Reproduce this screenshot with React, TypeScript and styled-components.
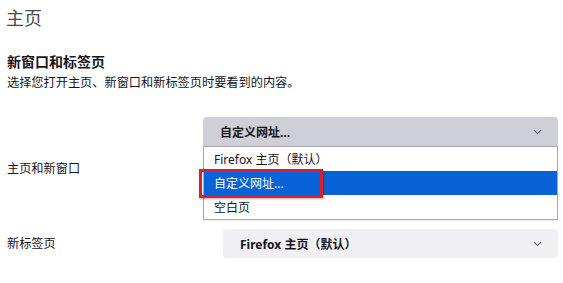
import React from "react";
import styled, { createGlobalStyle } from "styled-components";

const GlobalStyle = createGlobalStyle`
  html, body {
    margin: 0;
    padding: 0;
    background: #ffffff;
  }
  body {
    font-family: "Noto Sans", "Noto Sans CJK SC", sans-serif;
    color: #15141a;
  }
  * { box-sizing: border-box; }
`;

const Page = styled.div`
  width: 563px;
  height: 283px;
  padding: 6px 5px 0 6px;
  overflow: hidden;
`;

const Title = styled.h1`
  margin: 0;
  font-size: 18px;
  line-height: 24px;
  font-weight: 400;
  color: #4a4a4f;
`;

const SectionHeading = styled.h2`
  margin: 22px 0 0 1px;
  font-size: 14px;
  line-height: 20px;
  font-weight: 700;
  color: #15141a;
`;

const Description = styled.p`
  margin: 1px 0 0 1px;
  font-size: 12.2px;
  line-height: 20px;
  color: #15141a;
`;

const SettingsGrid = styled.div`
  margin-top: 24px;
  display: grid;
  grid-template-columns: 197px 1fr;
  row-gap: 9px;
  align-items: center;
`;

const Label = styled.div`
  font-size: 12.2px;
  line-height: 20px;
  padding-left: 1px;
  color: #15141a;
`;

const Control = styled.div<{ $reserve?: number; $indent?: number }>`
  position: relative;
  display: flex;
  flex-direction: column;
  padding-left: ${(p) => p.$indent ?? 0}px;
  padding-bottom: ${(p) => p.$reserve ?? 0}px;
`;

const SelectButton = styled.div<{ $open?: boolean }>`
  height: 29px;
  display: flex;
  align-items: center;
  justify-content: space-between;
  padding: 0 16px 0 17px;
  border-radius: ${(p) => (p.$open ? "4px 4px 0 0" : "4px")};
  background: ${(p) => (p.$open ? "#cfcfd8" : "#f0f0f4")};
  font-size: 12px;
  font-weight: 700;
  color: #15141a;
`;

const Chevron = () => (
  <svg width="9" height="6" viewBox="0 0 9 6" aria-hidden="true">
    <path d="M1 1.2 L4.5 4.6 L8 1.2" fill="none" stroke="#5b5b66" strokeWidth="1.1" />
  </svg>
);

const Popup = styled.ul`
  position: absolute;
  top: 29px;
  left: 0;
  right: 0;
  margin: 0;
  padding: 0;
  list-style: none;
  background: #ffffff;
  border: 1px solid #a8a8ad;
  box-shadow: 0 1px 2px rgba(0, 0, 0, 0.08);
`;

const Option = styled.li<{ $selected?: boolean }>`
  height: 24px;
  display: flex;
  align-items: center;
  padding-left: 10px;
  font-size: 12px;
  background: ${(p) => (p.$selected ? "#0862d8" : "transparent")};
  color: ${(p) => (p.$selected ? "#ffffff" : "#15141a")};
`;

const Highlight = styled.div`
  position: absolute;
  top: 52px;
  left: -4px;
  width: 124px;
  height: 29px;
  border: 3px solid #d5222c;
  box-shadow: 1px 1px 2px rgba(80, 0, 0, 0.35);
  pointer-events: none;
`;

export default function App() {
  return (
    <>
      <GlobalStyle />
      <Page>
        <Title>主页</Title>
        <SectionHeading>新窗口和标签页</SectionHeading>
        <Description>选择您打开主页、新窗口和新标签页时要看到的内容。</Description>
        <SettingsGrid>
          <Label>主页和新窗口</Label>
          <Control $reserve={74}>
            <SelectButton $open>
              <span>自定义网址...</span>
              <Chevron />
            </SelectButton>
            <Popup>
              <Option>Firefox 主页（默认）</Option>
              <Option $selected>自定义网址...</Option>
              <Option>空白页</Option>
            </Popup>
            <Highlight />
          </Control>
          <Label>新标签页</Label>
          <Control $indent={20}>
            <SelectButton>
              <span>Firefox 主页（默认）</span>
              <Chevron />
            </SelectButton>
          </Control>
        </SettingsGrid>
      </Page>
    </>
  );
}
